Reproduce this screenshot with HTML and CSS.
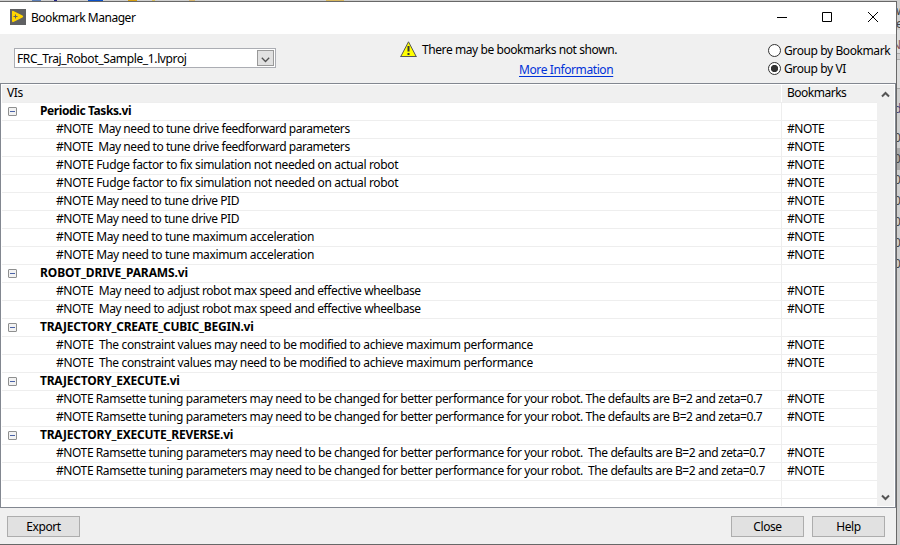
FILE: index.html
```
<!DOCTYPE html>
<html lang="en">
<head>
<meta charset="utf-8">
<title>Bookmark Manager</title>
<link rel="stylesheet" href="styles.css">
</head>
<body>
<div class="desktop">
<main class="window">
  <header class="titlebar">
    <svg class="app-icon" width="16" height="16" viewBox="0 0 16 16"><path fill="#5f6062" d="M0 0h16v16H0z"/><path fill="#ffd500" d="M2 2.8Q2 1.5 3.4 2L12.5 6.5Q14 7.5 12.5 8.6L3.4 13Q2 13.5 2 12z"/><path stroke="#5f6062" d="M3.5 7.5h4M5.5 5.5v4"/></svg>
    <h1>Bookmark Manager</h1>
    <svg class="controls" width="102" height="12" viewBox="0 0 102 12" fill="none" stroke="#000"><path d="M1 6.500h10M46.500 1.500h9v9h-9zM92 1l10 10M102 1L92 11"/></svg>
  </header>
  <section class="options">
    <div class="combo"><span>FRC_Traj_Robot_Sample_1.lvproj</span><div class="drop"><svg width="9" height="6" viewBox="0 0 9 6"><path d="M.8.800l3.700 3.700L8.200.800" fill="none" stroke="#505050" stroke-width="1.300"/></svg></div></div>
    <div class="notice">
      <svg width="17" height="17" viewBox="0 0 17 17"><path d="M8.500.8L16.200 15.500H.8z" fill="#ff0" stroke="#555" stroke-linejoin="round"/><path d="M.5 15.500h16" stroke="#555"/><path d="M8.500 5v5.500M8.500 12v2" stroke="#333" stroke-width="2"/></svg>
      <span class="warning">There may be bookmarks not shown.</span>
      <a>More Information</a>
    </div>
    <div class="radios">
      <div><i></i><span>Group by Bookmark</span></div>
      <div><i class="on"></i><span>Group by VI</span></div>
    </div>
  </section>
  <section class="list">
    <div class="table">
      <div class="row head"><span>VIs</span><b>Bookmarks</b></div>
      <div class="row group tasks"><i></i><span>Periodic Tasks.vi</span><b></b></div>
      <div class="row feed"><span>#NOTE  May need to tune drive feedforward parameters</span><b>#NOTE</b></div>
      <div class="row feed"><span>#NOTE  May need to tune drive feedforward parameters</span><b>#NOTE</b></div>
      <div class="row snug"><span>#NOTE Fudge factor to fix simulation not needed on actual robot</span><b>#NOTE</b></div>
      <div class="row snug"><span>#NOTE Fudge factor to fix simulation not needed on actual robot</span><b>#NOTE</b></div>
      <div class="row"><span>#NOTE May need to tune drive PID</span><b>#NOTE</b></div>
      <div class="row"><span>#NOTE May need to tune drive PID</span><b>#NOTE</b></div>
      <div class="row snug"><span>#NOTE May need to tune maximum acceleration</span><b>#NOTE</b></div>
      <div class="row snug"><span>#NOTE May need to tune maximum acceleration</span><b>#NOTE</b></div>
      <div class="row group params"><i></i><span>ROBOT_DRIVE_PARAMS.vi</span><b></b></div>
      <div class="row"><span>#NOTE  May need to adjust robot max speed and effective wheelbase</span><b>#NOTE</b></div>
      <div class="row"><span>#NOTE  May need to adjust robot max speed and effective wheelbase</span><b>#NOTE</b></div>
      <div class="row group"><i></i><span>TRAJECTORY_CREATE_CUBIC_BEGIN.vi</span><b></b></div>
      <div class="row snug"><span>#NOTE  The constraint values may need to be modified to achieve maximum performance</span><b>#NOTE</b></div>
      <div class="row snug"><span>#NOTE  The constraint values may need to be modified to achieve maximum performance</span><b>#NOTE</b></div>
      <div class="row group"><i></i><span>TRAJECTORY_EXECUTE.vi</span><b></b></div>
      <div class="row tuning"><span>#NOTE Ramsette tuning parameters may need to be changed for better performance for your robot. The defaults are B=2 and zeta=0.7</span><b>#NOTE</b></div>
      <div class="row tuning"><span>#NOTE Ramsette tuning parameters may need to be changed for better performance for your robot. The defaults are B=2 and zeta=0.7</span><b>#NOTE</b></div>
      <div class="row group"><i></i><span>TRAJECTORY_EXECUTE_REVERSE.vi</span><b></b></div>
      <div class="row tuning"><span>#NOTE Ramsette tuning parameters may need to be changed for better performance for your robot.  The defaults are B=2 and zeta=0.7</span><b>#NOTE</b></div>
      <div class="row tuning"><span>#NOTE Ramsette tuning parameters may need to be changed for better performance for your robot.  The defaults are B=2 and zeta=0.7</span><b>#NOTE</b></div>
      <div class="row"><span></span><b></b></div>
      <div class="row"><span></span><b></b></div>
    </div>
    <div class="scrollbar">
      <svg width="9" height="7" viewBox="0 0 9 7"><path d="M1 5.500L4.500 2L8 5.500" fill="none" stroke="#555" stroke-width="2"/></svg>
      <svg width="9" height="7" viewBox="0 0 9 7"><path d="M1 1.500L4.500 5L8 1.500" fill="none" stroke="#555" stroke-width="2"/></svg>
    </div>
  </section>
  <footer><button>Export</button><button class="close">Close</button><button>Help</button></footer>
</main>
<svg class="behind" width="3" height="545" viewBox="0 0 3 545">
  <path fill="#ddd" d="M0 30h3v24H0zM0 60h3v28H0z"/><path fill="#aaa" d="M0 53h3v1H0zM0 59h3v1H0zM0 88h3v1H0zM0 148h3v22H0z"/>
  <g fill="#444" font-family="Noto Sans" font-size="12"><text x="-1" y="15">w</text><text x="-1" y="28">e</text><text x="-5" y="49" fill="#855">N</text><text x="-3" y="113" fill="#447">d</text><text x="-3" y="142">0</text><text x="-3" y="163">0</text><text x="-3" y="184">0</text><text x="-3" y="205">0</text><text x="-3" y="226">0</text><text x="-3" y="247">0</text><text x="-3" y="268">0</text></g>
</svg>
</div>
</body>
</html>
```
FILE: styles.css
```
* { box-sizing: border-box; }
body { margin: 0; font: 12px/18px "Noto Sans", sans-serif; letter-spacing: -.4px; color: #000; }
.desktop {
  width: 900px; height: 545px; padding-top: 1px; overflow: hidden; display: flex;
  background:
    linear-gradient(#5b7fb8, #5b7fb8) 32px 0 / 9px 1px no-repeat,
    linear-gradient(#222288, #222288) 54px 0 / 3px 1px no-repeat,
    linear-gradient(#0a50c8, #0a50c8) 88px 0 / 15px 1px no-repeat,
    linear-gradient(#d8a010, #d8a010) 128px 0 / 9px 1px no-repeat,
    linear-gradient(#d8c060, #d8c060) 152px 0 / 3px 1px no-repeat,
    linear-gradient(#d8b870, #d8b870) 189px 0 / 6px 1px no-repeat,
    linear-gradient(#d8b860, #d8b860) 326px 0 / 18px 1px no-repeat,
    #cfcfcf;
}
.window { width: 897px; height: 544px; flex: none; display: flex; flex-direction: column; border: solid #686868; border-width: 1px 1px 1px 0; background: #f0f0f0; }
.behind { margin-top: -1px; flex: none; overflow: hidden; }
.titlebar { height: 32px; background: #fff; display: flex; align-items: center; padding: 0 18px 2px 10px; }
h1 { font-size: 12px; line-height: 18px; font-weight: 400; letter-spacing: -.48px; margin: 2px auto 0 5px; }
.options { height: 49px; display: flex; }
.combo { width: 262px; height: 20px; margin: 14px 0 0 14px; border: 1px solid #abadb3; background: #fff; display: flex; justify-content: space-between; padding: 1px 1px 1px 2px; line-height: 17px; letter-spacing: -.36px; }
.drop { width: 17px; height: 16px; border: 1px solid #999; background: #e1e1e1; display: flex; align-items: center; justify-content: center; padding-top: 3px; }
.notice { width: 220px; margin: 7px 0 0 124px; display: grid; grid-template-columns: 22px 1fr; grid-template-rows: 18px 20px; }
.notice a { grid-column: 2; margin-left: 97px; padding-top: 2px; color: #0032d8; text-decoration: underline; text-underline-offset: 2px; white-space: nowrap; }
.warning { white-space: nowrap; letter-spacing: -.42px; }
.radios { margin: 8px 0 0 147px; }
.radios div { height: 18px; display: flex; align-items: center; white-space: nowrap; }
.radios i { width: 13px; height: 13px; border: 1px solid #333; border-radius: 50%; background: #fff; margin: -2px 3px 0 1px; flex: none; }
.radios .on { background: radial-gradient(circle, #333 3.300px, #fff 4px); }
.list { height: 425px; display: flex; border: 1px solid #828790; background: #fff; padding: 1px; justify-content: space-between; }
.table { width: 875px; height: 421px; overflow: hidden; }
.row { height: 18px; display: flex; border-bottom: 1px solid #eee; line-height: 16px; white-space: pre; }
.row span { width: 780px; padding-left: 54px; border-right: 1px solid #eee; flex: none; }
.row b { font-weight: 400; padding-left: 5px; }
.feed span { letter-spacing: -.45px; }
.snug span { letter-spacing: -.355px; }
.tuning span { letter-spacing: -.42px; }
.head { background: #f0f0f0; }
.head span { padding-left: 5px; border-color: #fff; }
.head b { letter-spacing: -.5px; }
.group { font-weight: 700; letter-spacing: -.22px; }
.tasks { letter-spacing: -.4px; }
.params { letter-spacing: -.1px; }
.group i { width: 9px; height: 9px; margin: 4px 0 0 6px; border: 1px solid #8e8f8f; border-radius: 1px; background: linear-gradient(#4b63a7, #4b63a7) center / 5px 1px no-repeat, #f2f2f2; flex: none; }
.group span { width: 765px; padding-left: 23px; }
.scrollbar { width: 17px; background: #f0f0f0; display: flex; flex-direction: column; justify-content: space-between; align-items: center; padding: 6px 0 5px; }
footer { display: flex; padding: 8px 11px 0 7px; }
button { width: 73px; height: 21px; border: 1px solid #adadad; background: #e1e1e1; font: inherit; letter-spacing: -.4px; padding: 0; line-height: 19px; color: #000; }
.close { margin: 0 8px 0 auto; }
```
